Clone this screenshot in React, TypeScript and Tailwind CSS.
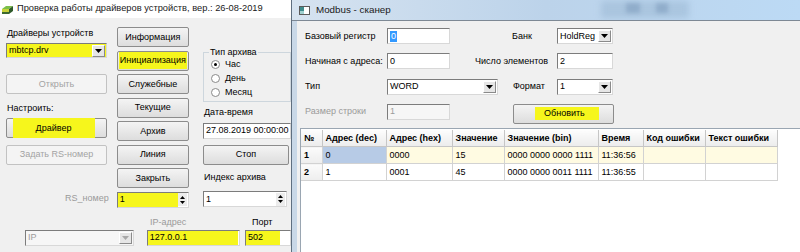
import React from 'react';

const font = "font-['Liberation_Sans',Arial,sans-serif]";

function Btn({ children, disabled = false, className = '' }: { children?: React.ReactNode; disabled?: boolean; className?: string }) {
  return (
    <button
      type="button"
      className={`flex h-[20px] items-center justify-center rounded-[2px] border ${
        disabled
          ? 'border-[#c2c2c2] bg-[#f4f4f4] text-[#a3a3a3]'
          : 'border-[#8c8c8c] bg-linear-to-b from-[#f4f4f4] to-[#dddddd] text-black'
      } ${className}`}
    >
      {children}
    </button>
  );
}

function Box({ children, disabled = false, className = '' }: { children?: React.ReactNode; disabled?: boolean; className?: string }) {
  return (
    <div
      className={`flex items-center border border-t-[#7c7c7c] border-l-[#7c7c7c] border-r-[#d8d8d8] border-b-[#d8d8d8] ${
        disabled ? 'bg-[#f6f6f6] text-[#9c9c9c]' : 'bg-white text-black'
      } ${className}`}
    >
      {children}
    </div>
  );
}

function Arrow({ disabled = false }: { disabled?: boolean }) {
  return (
    <span className="ml-auto mr-[1px] flex h-[12px] w-[13px] shrink-0 items-center justify-center border border-t-white border-l-white border-r-[#8a8a8a] border-b-[#8a8a8a] bg-[#e6e6e6]">
      <svg width="7" height="4" viewBox="0 0 7 4">
        <path d="M0 0h7L3.5 4z" fill={disabled ? '#a8a8a8' : '#000'} />
      </svg>
    </span>
  );
}

function Spin() {
  return (
    <span className="ml-auto mr-[1px] flex h-[13px] w-[9px] shrink-0 flex-col items-center justify-center gap-[2px] bg-[#ececec]">
      <svg width="5" height="3" viewBox="0 0 5 3">
        <path d="M2.5 0L5 3H0z" fill="#000" />
      </svg>
      <svg width="5" height="3" viewBox="0 0 5 3">
        <path d="M0 0h5L2.5 3z" fill="#000" />
      </svg>
    </span>
  );
}

function Radio({ checked = false, label }: { checked?: boolean; label: string }) {
  return (
    <div className="flex h-[14px] items-center">
      <span className="ml-[7px] flex h-[9px] w-[9px] items-center justify-center rounded-full border border-[#8a8a8a] bg-white">
        {checked && <span className="h-[3px] w-[3px] rounded-full bg-black" />}
      </span>
      <span className="ml-[5px]">{label}</span>
    </div>
  );
}

const head = ['№', 'Адрес (dec)', 'Адрес (hex)', 'Значение', 'Значение (bin)', 'Время', 'Код ошибки', 'Текст ошибки'];
const rows = [
  ['1', '0', '0000', '15', '0000 0000 0000 1111', '11:36:56', '', ''],
  ['2', '1', '0001', '45', '0000 0000 0011 1111', '11:36:55', '', ''],
];

function DriverWindow() {
  return (
    <div className="flex h-full w-[291px] shrink-0 flex-col overflow-hidden bg-[#f0f0f0]">
      {/* title */}
      <div className="flex h-[18px] items-center whitespace-nowrap bg-white pl-[1px] text-[9.3px]">
        <svg width="13" height="10" viewBox="0 0 13 10" className="mt-[2px] shrink-0">
          <path d="M1 4L5 1h7L8 4z" fill="#7cbf4a" />
          <path d="M1 4h7v5H1z" fill="#c8d23a" />
          <path d="M8 4l4-3v5L8 9z" fill="#2f5a2a" />
          <path d="M1 7h7v2H1z" fill="#3d6a2f" />
        </svg>
        <span className="ml-[3px] text-[#1a1a1a]">Проверка работы драйверов устройств, вер.: 26-08-2019</span>
      </div>

      <div className="flex flex-col pl-[6px] text-[9px] leading-[11px]">
        <div className="flex">
          {/* column 1 */}
          <div className="flex w-[105px] flex-col">
            <span className="mt-[10px] h-[11px] pl-[1px]">Драйверы устройств</span>
            <Box className="mt-[4px] h-[15px] w-[101px]">
              <span className="flex h-full w-full items-center bg-[#f6f61c] pl-[2px]">
                mbtcp.drv
                <Arrow />
              </span>
            </Box>
            <Btn disabled className="mt-[16px] w-[101px]">Открыть</Btn>
            <span className="mt-[8.5px] h-[11px] pl-[1px]">Настроить:</span>
            <Btn className="mt-[4.5px] w-[101px]">
              <span className="flex h-[20px] w-[82px] -translate-x-[3px] items-center justify-center bg-[#f6f61c]">Драйвер</span>
            </Btn>
            <Btn disabled className="mt-[6.5px] w-[101px]">Задать RS-номер</Btn>
            <span className="mt-[28px] h-[11px] text-right text-[#9a9a9a]">RS_номер</span>
          </div>

          {/* column 2 */}
          <div className="ml-[8px] mt-[9px] flex w-[74px] flex-col gap-[3.5px]">
            <Btn>Информация</Btn>
            <Btn>
              <span className="flex h-[17px] w-[68px] items-center justify-center bg-[#f6f61c]">Инициализация</span>
            </Btn>
            <Btn>Служебные</Btn>
            <Btn>Текущие</Btn>
            <Btn>Архив</Btn>
            <Btn>Линия</Btn>
            <Btn>Закрыть</Btn>
            <Box className="h-[16px]">
              <span className="flex h-full flex-1 items-center bg-[#f6f61c] pl-[2px]">1</span>
              <Spin />
            </Box>
          </div>

          {/* column 3 */}
          <div className="ml-[14px] flex w-[88px] shrink-0 flex-col">
            <fieldset className="mt-[29px] h-[55px] border border-[#cdd6dd] pb-[3px]">
              <legend className="ml-[5px] h-[11px] px-[1px]">Тип архива</legend>
              <div className="-mt-[1px]">
                <Radio checked label="Час" />
                <Radio label="День" />
                <Radio label="Месяц" />
              </div>
            </fieldset>
            <span className="mt-[5px] h-[11px] pl-[1px]">Дата-время</span>
            <Box className="mt-[4.5px] h-[16px] pl-[2px]">27.08.2019 00:00:00</Box>
            <Btn className="mt-[6px] w-[86px]">Стоп</Btn>
            <span className="mt-[7px] h-[11px] pl-[1px]">Индекс архива</span>
            <Box className="mt-[8.5px] h-[16px] w-[84px] pl-[2px]">
              1
              <Spin />
            </Box>
          </div>
        </div>

        {/* bottom rows */}
        <div className="mt-[9.5px] flex h-[11px]">
          <span className="ml-[144px] w-[102px] text-[#9a9a9a]">IP-адрес</span>
          <span>Порт</span>
        </div>
        <div className="mt-[1.5px] flex">
          <Box disabled className="ml-[19px] h-[16px] w-[112px] pl-[2px]">
            IP
            <Arrow disabled />
          </Box>
          <Box className="ml-[13px] h-[16px] w-[96px]">
            <span className="flex h-full w-[90px] items-center bg-[#f6f61c] pl-[2px]">127.0.0.1</span>
          </Box>
          <Box className="ml-[5px] h-[16px] w-[46px] shrink-0">
            <span className="flex h-full w-[34px] items-center bg-[#f6f61c] pl-[2px]">502</span>
          </Box>
        </div>
      </div>
    </div>
  );
}

function ScannerWindow() {
  return (
    <div className="flex h-full flex-1 flex-col border-l border-[#5f6f80]">
      {/* title */}
      <div className="relative flex h-[20px] items-center overflow-hidden bg-linear-to-r from-[#d6e3f0] via-[#bcd3ea] to-[#bcdaf5] pl-[7px] text-[9.8px]">
        <svg width="11" height="9" viewBox="0 0 11 9">
          <rect x="0.5" y="0.5" width="10" height="8" fill="#fff" stroke="#5a5a5a" />
          <rect x="1" y="1" width="4" height="4" fill="#3f8c8c" />
          <rect x="1" y="5" width="4" height="3" fill="#9fd0d0" />
        </svg>
        <span className="ml-[6px] text-[#1a1a1a]">Modbus - сканер</span>
        <div className="absolute left-[309px] top-[1px] h-[17px] w-[88px] rounded-[3px] bg-[#9fbad6]/60 blur-[3px]" />
        <div className="absolute left-[334px] top-[3px] h-[10px] w-[14px] bg-[#7e9cbd]/60 blur-[2px]" />
        <div className="absolute left-[364px] top-[3px] h-[10px] w-[12px] bg-[#7e9cbd]/60 blur-[2px]" />
      </div>
      <div className="h-px bg-[#7d8894]" />

      <div className="flex flex-1">
        <div className="w-[5px] bg-[#c9d8e7]" />
        <div className="flex flex-1 flex-col bg-[#f0f0f0] text-[9px] leading-[11px]">
          <div className="mt-[7px] flex flex-col gap-[9.3px] pl-[8px]">
            <div className="flex h-[16px] items-center">
              <span className="w-[82px]">Базовый регистр</span>
              <Box className="h-[16px] w-[63px] pl-[2px]">
                <span className="bg-[#3399ff] px-[1px] text-white">0</span>
              </Box>
              <span className="ml-[62px] w-[45px]">Банк</span>
              <Box className="h-[16px] w-[56px] pl-[2px]">
                HoldReg
                <Arrow />
              </Box>
            </div>
            <div className="flex h-[16px] items-center">
              <span className="w-[82px]">Начиная с адреса:</span>
              <Box className="h-[16px] w-[63px] pl-[2px]">0</Box>
              <span className="ml-[25px] w-[82px]">Число элементов</span>
              <Box className="h-[16px] w-[56px] pl-[2px]">2</Box>
            </div>
            <div className="flex h-[16px] items-center">
              <span className="w-[82px]">Тип</span>
              <Box className="h-[16px] w-[111px] pl-[2px]">
                WORD
                <Arrow />
              </Box>
              <span className="ml-[15px] w-[44px]">Формат</span>
              <Box className="h-[16px] w-[56px] pl-[2px]">
                1
                <Arrow />
              </Box>
            </div>
            <div className="flex h-[16px] items-start">
              <span className="mt-[2px] w-[82px] text-[#9a9a9a]">Размер строки</span>
              <Box disabled className="h-[16px] w-[63px] pl-[2px]">1</Box>
              <Btn className="ml-[63px] h-[19px] w-[101px] justify-start">
                <span className="ml-[21px] flex h-[13px] items-center bg-[#f6f61c] pl-[9px] pr-[14px]">Обновить</span>
              </Btn>
            </div>
          </div>

          {/* grid */}
          <div className="ml-[3px] mt-[8px] flex-1 border-l border-t border-[#9aa6b2] bg-white pt-px">
            <table className="w-[476px] table-fixed border-collapse text-[9px] leading-[11px]">
              <colgroup>
                <col className="w-[21px]" />
                <col className="w-[64px]" />
                <col className="w-[66px]" />
                <col className="w-[52px]" />
                <col className="w-[94px]" />
                <col className="w-[45px]" />
                <col className="w-[62px]" />
                <col className="w-[72px]" />
              </colgroup>
              <thead>
                <tr className="h-[17px]">
                  {head.map((h) => (
                    <th
                      key={h}
                      className="overflow-hidden whitespace-nowrap border-r border-b border-[#c6c6c6] bg-linear-to-b from-[#fdfdfd] to-[#ececec] pl-[3px] text-left font-bold"
                    >
                      {h}
                    </th>
                  ))}
                </tr>
              </thead>
              <tbody>
                {rows.map((r, i) => (
                  <tr key={r[0]} className="h-[17px]">
                    {r.map((c, j) => (
                      <td
                        key={j}
                        className={`whitespace-nowrap border-r border-b border-[#d2d2d2] pl-[3px] ${
                          j === 0
                            ? 'bg-linear-to-b from-[#fbfbfb] to-[#ededed] font-bold'
                            : i === 0 && j === 1
                              ? 'bg-[#b7cbe6]'
                              : i === 0
                                ? 'bg-[#fffbe2]'
                                : 'bg-white'
                        }`}
                      >
                        {c}
                      </td>
                    ))}
                  </tr>
                ))}
              </tbody>
            </table>
          </div>
        </div>
      </div>
    </div>
  );
}

export default function App() {
  return (
    <div className={`flex h-[252px] w-[800px] overflow-hidden bg-[#f0f0f0] text-black ${font}`}>
      <DriverWindow />
      <ScannerWindow />
    </div>
  );
}
